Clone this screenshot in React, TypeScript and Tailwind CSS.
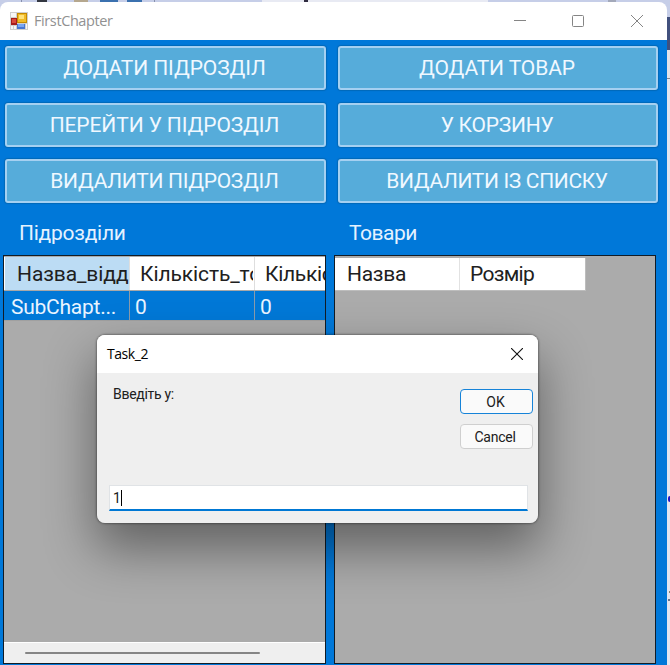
import type { ReactNode } from "react";

function ActionButton({ children, spacing }: { children: ReactNode; spacing: string }) {
  return (
    <button
      className={`flex h-11 items-center justify-center rounded-[3px] border-2 border-[#a5d0f1] bg-[#56acda] pr-[2px] text-[21px] leading-6 whitespace-nowrap text-[#f0f8ff] shadow-[0_0_1px_1px_#0069b9] ${spacing}`}
    >
      {children}
    </button>
  );
}

function AppIcon() {
  return (
    <svg width="18" height="18" viewBox="0 0 18 18" className="shrink-0">
      <rect width="18" height="18" fill="#cfcfcf" />
      <path d="M1 1h5v4H1zM1 14h2v3H1zM4 14h2v3H4zM16 12h1v5h-1z" fill="#f7f7f7" />
      <rect x="1" y="6" width="6" height="7" fill="#a51c1c" />
      <rect x="2" y="7" width="4" height="4" fill="#d8493d" />
      <rect x="7" y="1" width="10" height="10" fill="#c58a00" />
      <rect x="8" y="2" width="8" height="8" fill="#f0bb28" />
      <rect x="9" y="3" width="5" height="4" fill="#ffe27a" />
      <rect x="7" y="12" width="8" height="5" fill="#4776d2" />
      <rect x="8" y="12" width="6" height="3" fill="#79a6f1" />
    </svg>
  );
}

function DesktopTop() {
  return (
    <div className="flex h-[2px] shrink-0 bg-[#c6cee8]">
      <div className="ml-[21px] h-full w-px bg-[#8790ad]" />
      <div className="ml-[15px] h-full w-[10px] bg-[#333741]" />
      <div className="ml-[27px] h-full w-[14px] bg-[#b5a78e]" />
      <div className="ml-3 h-full w-[18px] bg-[#3b71af]" />
      <div className="ml-[9px] h-full w-[15px] bg-[#3b71af]" />
      <div className="ml-3 h-full w-px bg-[#8790ad]" />
      <div className="ml-[107px] h-full w-[226px] bg-[#e8eaf3]">
        <div className="ml-[42px] h-full w-1 bg-[#302c40]" />
      </div>
      <div className="ml-[120px] h-full w-2 bg-[#a3a9ba]" />
    </div>
  );
}

function DesktopRight() {
  return (
    <div className="flex w-[3px] shrink-0 flex-col overflow-hidden bg-[#e3e6ef]">
      <div className="h-[15px] bg-[#c6cee8]" />
      <div className="h-[33px] bg-[#41507d]" />
      <div className="h-[28px] bg-[#e3e3e9]" />
      <div className="h-px bg-[#85858d]" />
      <div className="mt-[417px] ml-px h-[6px] w-1 rounded-full bg-[#2015c5]" />
      <div className="mt-[89px] ml-[2px] h-[2px] bg-[#918471]" />
      <div className="mt-[6px] ml-px h-[2px] bg-[#68768d]" />
    </div>
  );
}

function TitleBar() {
  return (
    <div className="flex h-[38px] shrink-0 items-center rounded-t-lg bg-white pl-[10px]">
      <AppIcon />
      <span className="ml-[6px] font-['Open_Sans',sans-serif] text-[14.500px] tracking-[-0.4px] text-[#919191]">
        FirstChapter
      </span>
      <svg width="132" height="14" viewBox="0 0 132 14" className="mr-[23px] ml-auto" fill="none" stroke="#858585">
        <path d="M2 6.5h12" />
        <rect x="60.5" y="1.5" width="11" height="11" rx="1" />
        <path d="M119 1l12 12M131 1l-12 12" />
      </svg>
    </div>
  );
}

function SectionsGrid() {
  return (
    <div className="flex h-[409px] w-[323px] flex-col border border-[#111c26] bg-[#ababab] pt-px">
      <div className="flex h-[34px] border-b border-[#a8a8a8] bg-white pl-px text-[21px] leading-[34px] whitespace-nowrap text-[#202020]">
        <div className="w-[125px] shrink-0 overflow-hidden border-r border-[#dedede] bg-[#bcdcf4] pl-[12px] tracking-[-0.1px]">
          Назва_відд
        </div>
        <div className="w-[125px] shrink-0 overflow-hidden border-r border-[#dedede] pr-px pl-[10px]">
          <div className="overflow-hidden tracking-[-0.1px]">Кількість_то</div>
        </div>
        <div className="flex-1 overflow-hidden pl-[10px] tracking-[-0.3px]">Кількіс</div>
      </div>
      <div className="flex h-[30px] border-b border-[#a0a0a0] bg-[#0078d7] pl-px text-[21px] leading-[32px] text-[#e9f4ff]">
        <div className="w-[125px] shrink-0 border-r border-[#8a9bab] pl-[6px] tracking-[-0.25px]">SubChapt...</div>
        <div className="w-[125px] shrink-0 border-r border-[#8a9bab] pl-[5px]">0</div>
        <div className="pl-[5px]">0</div>
      </div>
      <div className="flex-1" />
      <div className="flex h-[21px] items-center border-t border-white bg-[#efefef] px-[21px]">
        <div className="h-[2px] w-[235px] rounded-full bg-[#858585]" />
      </div>
    </div>
  );
}

function GoodsGrid() {
  return (
    <div className="h-[409px] w-[322px] border border-[#111c26] bg-[#ababab] pt-[2px]">
      <div className="flex h-[33px] w-[251px] border-r border-b border-[#bdbdbd] bg-white text-[21px] leading-8 text-[#202020]">
        <div className="w-[125px] border-r border-[#e2e2e2] pl-[12px] tracking-[-0.3px]">Назва</div>
        <div className="pl-[10px] tracking-[-0.7px]">Розмір</div>
      </div>
    </div>
  );
}

function InputDialog() {
  return (
    <div className="absolute top-[335px] left-[97px] flex h-[188px] w-[441px] flex-col overflow-hidden rounded-lg bg-[#efefef] text-[#202020]">
      <div className="flex h-[38px] items-center justify-between bg-white pr-[15px] pl-[10px]">
        <span className="pb-px font-['Open_Sans',sans-serif] text-[14px] tracking-[-0.45px] text-black">Task_2</span>
        <svg width="12" height="12" viewBox="0 0 12 12" stroke="#111" strokeWidth="1.1">
          <path d="M0 0l12 12M12 0L0 12" />
        </svg>
      </div>
      <div className="flex justify-between pr-[5px] pl-4 text-sm">
        <span className="mt-[12px] leading-[18px] tracking-[-0.3px]">Введіть у:</span>
        <div className="mt-4 flex w-[73px] flex-col gap-[10px] leading-5">
          <button className="h-[25px] rounded border-[1.500px] border-[#1683d8] bg-[#fafafa] pr-[2px]">OK</button>
          <button className="h-[25px] rounded border border-[#cfcfcf] bg-[#fafafa] pr-[3px] tracking-[-0.25px]">
            Cancel
          </button>
        </div>
      </div>
      <div className="mt-[36px] ml-3 flex h-[26px] w-[419px] items-center border border-b-2 border-[#e0e3e6] border-b-[#0078d4] bg-white pl-[3px] text-sm">
        <span>1</span>
        <div className="h-4 w-px bg-black" />
      </div>
    </div>
  );
}

export default function App() {
  return (
    <div className="relative flex h-[665px] w-[670px] flex-col overflow-hidden bg-[#c6cee8] font-[Roboto,sans-serif]">
      <DesktopTop />
      <div className="flex min-h-0 flex-1">
        <div className="flex w-[667px] shrink-0 flex-col">
          <TitleBar />
          <div className="flex-1 bg-[#0078d9] pt-[6px]">
            <div className="grid grid-cols-[321px_320px] gap-x-[12px] gap-y-[12.500px] pl-[5px]">
              <ActionButton spacing="tracking-[-0.1px]">ДОДАТИ ПІДРОЗДІЛ</ActionButton>
              <ActionButton spacing="tracking-[-0.1px]">ДОДАТИ ТОВАР</ActionButton>
              <ActionButton spacing="tracking-[-0.1px]">ПЕРЕЙТИ У ПІДРОЗДІЛ</ActionButton>
              <ActionButton spacing="tracking-[-0.25px]">У КОРЗИНУ</ActionButton>
              <ActionButton spacing="tracking-[-0.3px]">ВИДАЛИТИ ПІДРОЗДІЛ</ActionButton>
              <ActionButton spacing="tracking-[-0.35px]">ВИДАЛИТИ ІЗ СПИСКУ</ActionButton>
            </div>
            <div className="flex h-[52px] pt-[14px] pl-[19px] text-[21px] leading-8 tracking-[-0.25px] text-[#e5f2ff]">
              <div className="w-[330px]">Підрозділи</div>
              <div className="tracking-[-0.5px]">Товари</div>
            </div>
            <div className="flex gap-2 pl-[3px]">
              <SectionsGrid />
              <GoodsGrid />
            </div>
          </div>
        </div>
        <DesktopRight />
      </div>
      <div className="absolute top-[335px] left-[97px] h-[188px] w-[441px] rounded-lg shadow-[0_0_2px_1px_#00000050,0_24px_50px_2px_#0000006c]" />
      <InputDialog />
    </div>
  );
}
